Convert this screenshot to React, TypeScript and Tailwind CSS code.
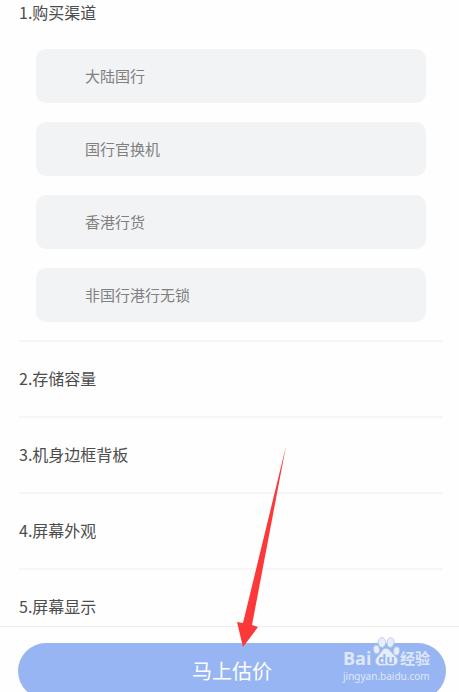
import { useState } from "react";

const channels = ["大陆国行", "国行官换机", "香港行货", "非国行港行无锁"];
const sections = ["2.存储容量", "3.机身边框背板", "4.屏幕外观", "5.屏幕显示"];

function Watermark() {
  return (
    <div className="pointer-events-none absolute right-7 bottom-2.5 flex w-[88px] flex-col gap-0.5 text-[#dfe8fb]">
      <div className="flex h-8 items-end">
        <span className="w-[29px] font-['Open_Sans','Noto_Sans',sans-serif] text-lg leading-5 font-bold">Bai</span>
        <svg className="h-8 w-7" viewBox="0 0 28 32" aria-hidden="true">
          <g fill="#e6edfb" stroke="#b7c6e6" strokeWidth="0.8">
            <ellipse cx="4.500" cy="13.500" rx="3" ry="4.200" transform="rotate(-10 4.500 13.500)" />
            <ellipse cx="10" cy="6.500" rx="3.700" ry="4.800" />
            <ellipse cx="18.500" cy="6.500" rx="3.500" ry="4.800" transform="rotate(8 18.500 6.500)" />
            <ellipse cx="24.500" cy="15" rx="3" ry="4.200" transform="rotate(8 24.500 15)" />
            <path d="M14 12.500c4 0 5 4 7.500 6s5 4.500 4 7.500-4 4-7 3.500-6-.5-8.500 0-6-.5-6.500-3.500 1.500-5 4-7.500 2.500-6 6.500-6Z" />
          </g>
          <text x="14.500" y="27.500" textAnchor="middle" className="fill-[#97b5f3] font-['Open_Sans','Noto_Sans',sans-serif] text-[13px] font-bold">du</text>
        </svg>
        <span className="font-['Noto_Sans_CJK_SC',sans-serif] text-[15px] leading-5 font-bold whitespace-nowrap">经验</span>
      </div>
      <span className="font-['Noto_Sans',sans-serif] text-[10px] leading-3">jingyan.baidu.com</span>
    </div>
  );
}

export default function App() {
  const [selected, setSelected] = useState("");

  return (
    <div className="relative flex h-screen flex-col overflow-hidden bg-[#fefefe] font-['Noto_Sans_CJK_SC',sans-serif] text-[#4c4c4c]">
      <main className="min-h-0 flex-1 overflow-hidden pr-4 pl-[19px]">
        <section className="border-b-2 border-[#f5f5f6] pb-[18px]">
          <h2 className="text-base leading-6">1.购买渠道</h2>
          <div className="flex flex-col gap-[19px] px-[17px] pt-[25px]">
            {channels.map((name) => (
              <button
                key={name}
                type="button"
                aria-pressed={selected === name}
                onClick={() => setSelected(name)}
                className="h-[54px] rounded-[10px] bg-[#f2f3f5] pl-[49px] text-left text-[15px] leading-6 text-[#808080]"
              >
                {name}
              </button>
            ))}
          </div>
        </section>
        {sections.map((title) => (
          <section key={title} className="flex h-[76px] items-center border-b-2 border-[#f5f5f6] pb-0.5">
            <h2 className="text-base leading-6">{title}</h2>
          </section>
        ))}
      </main>
      <footer className="relative h-[66px] shrink-0 border-t border-[#eeeeef] bg-[#fefefe] pt-4 pr-[13px] pl-[18px]">
        <button type="button" className="h-14 w-full rounded-full bg-[#97b5f3] text-xl leading-7 text-white">
          马上估价
        </button>
        <Watermark />
      </footer>
      <svg className="pointer-events-none absolute bottom-[43px] left-[236px] h-[203px] w-[52px]" viewBox="0 0 52 203" aria-hidden="true">
        <path d="M50 0 16 179l6 2-15 20L1 176l6 1Z" fill="#fc3839" />
      </svg>
    </div>
  );
}
